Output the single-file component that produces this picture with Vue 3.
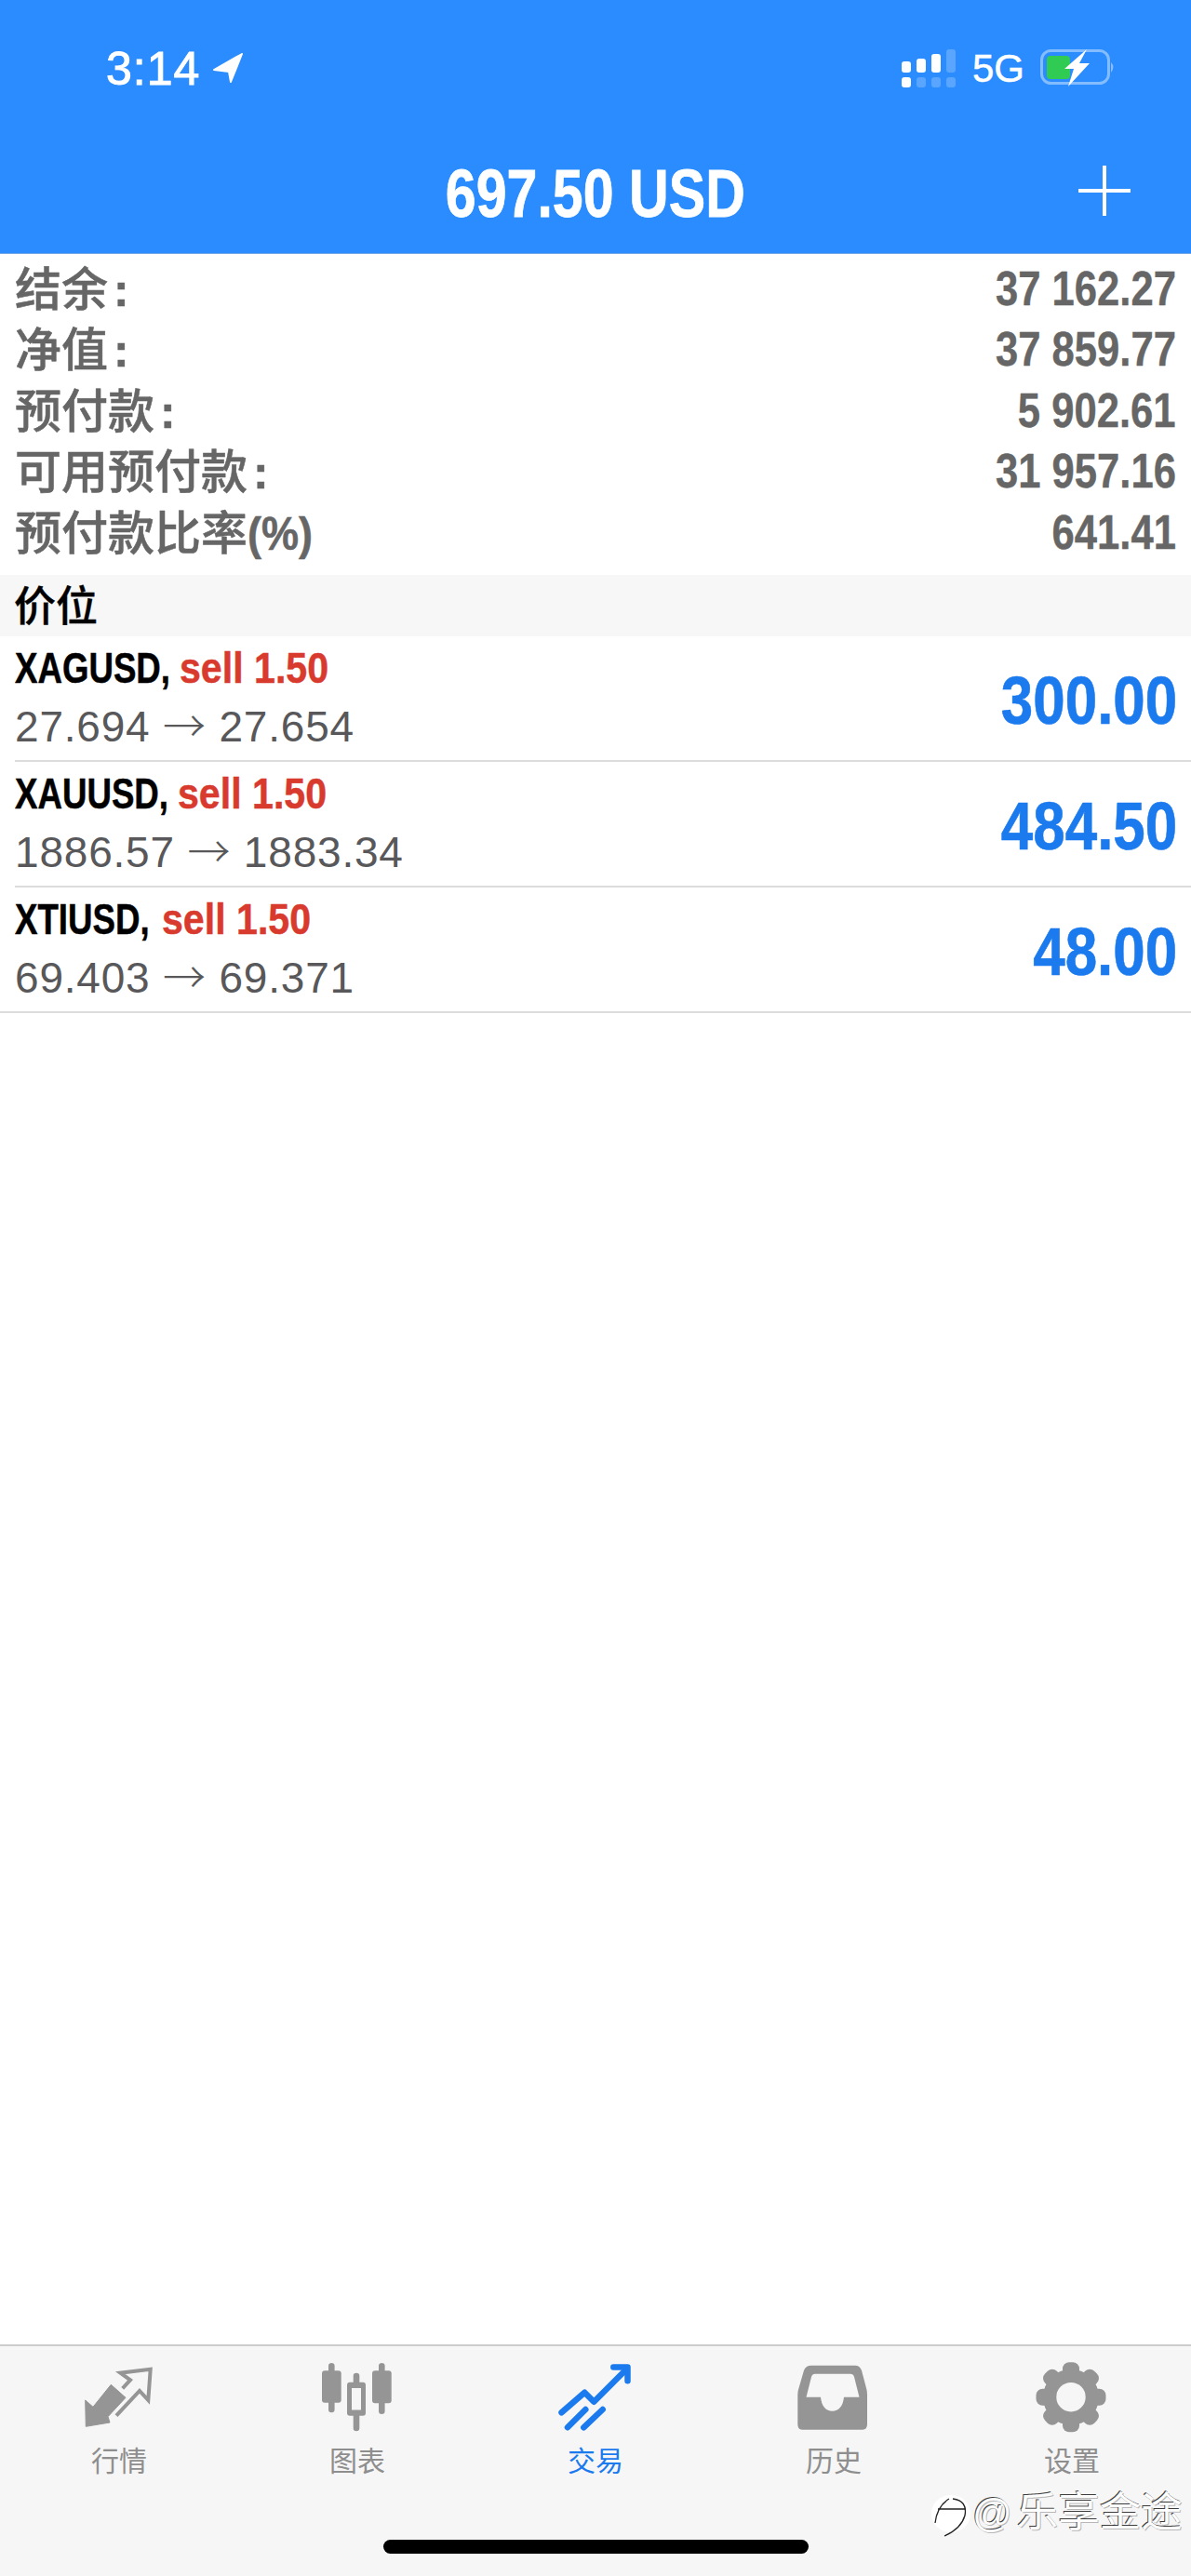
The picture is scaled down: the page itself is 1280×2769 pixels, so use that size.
<script setup>
const account = [
  { label: '结余', colon: true, value: '37 162.27' },
  { label: '净值', colon: true, value: '37 859.77' },
  { label: '预付款', colon: true, value: '5 902.61' },
  { label: '可用预付款', colon: true, value: '31 957.16' },
  { label: '预付款比率', pct: true, value: '641.41' }
]
const FONT = 47
const SCALE = 0.78
const symMargin = (p) => `${p.gap - p.em * FONT * (1 - SCALE)}px`
const positions = [
  { sym: 'XAGUSD,', em: 4.556, gap: 10, side: 'sell 1.50', from: '27.694', to: '27.654', profit: '300.00' },
  { sym: 'XAUUSD,', em: 4.5, gap: 10, side: 'sell 1.50', from: '1886.57', to: '1883.34', profit: '484.50' },
  { sym: 'XTIUSD,', em: 3.945, gap: 13, side: 'sell 1.50', from: '69.403', to: '69.371', profit: '48.00' }
]
const teeth = [0, 45, 90, 135, 180, 225, 270, 315]
</script>

<template>
  <div class="page">
    <header class="head">
      <div class="status">
        <div class="status-left">
          <span class="clock">3:14</span>
          <svg class="loc" width="32" height="32" viewBox="0 0 32 32"><path d="M31 1 L1 18 L17 20 L19 31 Z" fill="#fff" stroke="#fff" stroke-width="2" stroke-linejoin="round" /></svg>
        </div>
        <div class="status-right">
          <svg width="58" height="41" viewBox="0 0 58 41">
            <g fill="#fff">
              <rect x="0" y="13" width="10" height="12" rx="3" />
              <rect x="16" y="10" width="10" height="15" rx="3" />
              <rect x="32" y="5" width="10" height="20" rx="3" />
              <rect x="0" y="30" width="10" height="11" rx="3" />
            </g>
            <g fill="#fff" opacity=".22">
              <rect x="48" y="0" width="10" height="25" rx="3" />
              <rect x="16" y="30" width="10" height="11" rx="3" />
              <rect x="32" y="30" width="10" height="11" rx="3" />
              <rect x="48" y="30" width="10" height="11" rx="3" />
            </g>
          </svg>
          <span class="net">5G</span>
          <svg class="batt" width="82" height="40" viewBox="0 0 82 40">
            <rect x="1.5" y="1.5" width="72" height="35" rx="10" fill="none" stroke="#fff" stroke-opacity=".42" stroke-width="3" />
            <rect x="7" y="7" width="25" height="25" rx="4" fill="#2fcb52" />
            <path d="M76 14 Q81 19 76 25 Z" fill="#fff" fill-opacity=".42" />
            <path d="M50 0 L26 21 L36 21 L30 40 L53 15 L42 15 Z" fill="#fff" />
          </svg>
        </div>
      </div>
      <div class="nav">
        <span class="title">697.50 USD</span>
        <svg class="plus" width="56" height="54" viewBox="0 0 56 54"><path d="M28 0V54M0 27H56" stroke="#fff" stroke-width="4" /></svg>
      </div>
    </header>

    <section class="account">
      <div v-for="a in account" :key="a.label" class="acc-row">
        <span class="acc-label">{{ a.label }}<span v-if="a.colon" class="colon">:</span><span v-if="a.pct" class="pct">(%)</span></span>
        <span class="acc-value">{{ a.value }}</span>
      </div>
    </section>

    <div class="section-bar">价位</div>

    <section>
      <div v-for="(p, i) in positions" :key="p.sym" class="pos" :class="{ last: i === positions.length - 1 }">
        <div class="pos-inner">
          <div class="pos-left">
            <div class="pos-name"><span class="sym" :style="{ marginRight: symMargin(p) }">{{ p.sym }}</span><span class="side">{{ p.side }}</span></div>
            <div class="pos-price">{{ p.from }} <span class="arrow">→</span> {{ p.to }}</div>
          </div>
          <div class="pos-profit">{{ p.profit }}</div>
        </div>
      </div>
    </section>

    <nav class="tabbar">
      <div class="tabs">
        <div class="tab">
          <svg width="80" height="80" viewBox="0 0 80 80">
            <path d="M4.3 71.3 L3.7 43 L12 50.3 L31.3 26.3 L47 40.3 L28 60.7 L30 67 Z" fill="#959595" stroke="#959595" stroke-linejoin="round" />
            <path d="M43.7 30.3 L52 21.3 L41.3 13.7 L73.7 9.7 L71.3 43 L62 33 L37 59.7" fill="none" stroke="#959595" stroke-width="4" />
          </svg>
          <span>行情</span>
        </div>
        <div class="tab">
          <svg width="80" height="80" viewBox="0 0 80 80">
            <g fill="#959595">
              <rect x="2" y="11.3" width="20.7" height="34.4" rx="3" />
              <rect x="9" y="3" width="6.6" height="53.3" rx="3.3" />
              <rect x="56" y="11.3" width="20.7" height="35" rx="3" />
              <rect x="63" y="3" width="6.6" height="55" rx="3.3" />
              <rect x="35.7" y="13.7" width="6.6" height="62.6" rx="3.3" />
              <rect x="29" y="23.7" width="20" height="36" rx="3" />
            </g>
            <rect x="34" y="30" width="10" height="23.5" fill="#f6f6f6" />
          </svg>
          <span>图表</span>
        </div>
        <div class="tab active">
          <svg width="80" height="80" viewBox="0 0 80 80">
            <g fill="none" stroke="#1a7aee" stroke-width="6.5" stroke-linecap="round" stroke-linejoin="round">
              <path d="M3.5 56.3 L28.3 34.7 L38.3 44.7 L70 13" />
              <path d="M59.3 7.5 H74.5 V22.3" />
              <path d="M10 72.3 L29.3 53" />
              <path d="M27.3 72.3 L47.7 53" />
            </g>
          </svg>
          <span>交易</span>
        </div>
        <div class="tab">
          <svg width="80" height="80" viewBox="0 0 80 80">
            <path fill="#959595" fill-rule="evenodd" d="M16 5.7 H63 Q68 5.7 70 11 L75 30 Q76 33 76 37 V69 Q76 74.7 71 74.7 H6 Q1.3 74.7 1.3 69 V37 Q1.3 33 2.5 30 L8 11 Q10 5.7 16 5.7 Z M20 14.7 H58 Q61 14.7 62 18 L67.5 39.7 H51 C50 50 45 54.7 38.5 54.7 C32 54.7 27 50 26 39.7 H10.5 L16 18 Q17 14.7 20 14.7 Z" />
          </svg>
          <span>历史</span>
        </div>
        <div class="tab">
          <svg width="80" height="80" viewBox="0 0 80 80">
            <g fill="#959595">
              <circle cx="39" cy="39.7" r="30" />
              <rect v-for="t in teeth" :key="t" x="30" y="2.2" width="18" height="20" rx="7" :transform="`rotate(${t} 39 39.7)`" />
            </g>
            <circle cx="39" cy="39.7" r="15.7" fill="#f6f6f6" />
          </svg>
          <span>设置</span>
        </div>
      </div>
      <div class="home-bar"></div>
      <div class="watermark">
        <svg width="44" height="50" viewBox="0 0 44 50">
          <ellipse cx="22" cy="24" rx="21" ry="20" fill="#fff" />
          <path d="M5 34 Q7 16 20 8 M24 8 Q40 10 37 26 Q33 40 15 48 M8 19 H38" fill="none" stroke="#222" stroke-width="1.3" />
        </svg>
        <span class="wm-text"><span class="wm-at">@</span>乐享金途</span>
      </div>
    </nav>
  </div>
</template>

<style scoped>
.page {
  position: relative;
  width: 1280px;
  height: 2769px;
  overflow: hidden;
  display: flex;
  flex-direction: column;
  background: #fff;
  font-family: "Liberation Sans", "Noto Sans CJK SC", sans-serif;
}
.head {
  height: 273px;
  box-sizing: border-box;
  background: #2a8cff;
  border-bottom: 1px solid #6ea6e6;
  color: #fff;
}
.status {
  height: 136px;
  box-sizing: border-box;
  padding: 12px 80px 0 114px;
  display: flex;
  align-items: center;
  justify-content: space-between;
}
.status-left { display: flex; align-items: center; gap: 14px; }
.clock { font-size: 50px; line-height: 50px; font-weight: 500; letter-spacing: 1px; -webkit-text-stroke: 1px #fff; }
.loc { margin-top: -2px; }
.status-right { display: flex; align-items: center; }
.status-right > svg:first-child { margin-top: -2px; margin-right: -1px; position: relative; left: -2px; }
.net { margin-left: 17px; font-size: 42px; line-height: 40px; -webkit-text-stroke: .5px #fff; }
.batt { margin-left: 17px; margin-top: -3px; }
.nav {
  position: relative;
  height: 136px;
  display: flex;
  align-items: center;
  justify-content: center;
}
.title {
  font-size: 73px;
  line-height: 73px;
  font-weight: 700;
  margin-top: 6px;
  transform: scaleX(.81);
  white-space: nowrap;
  -webkit-text-stroke: .8px #fff;
}
.plus { position: absolute; right: 65px; top: 42px; }
.account { padding: 6px 16px 12px 16px; height: 345px; box-sizing: border-box; }
.acc-row {
  height: 65.5px;
  display: flex;
  align-items: center;
  justify-content: space-between;
  color: #666;
}
.acc-label {
  font-size: 50px;
  line-height: 60px;
  font-weight: 500;
  white-space: nowrap;
  color: #666;
  -webkit-text-stroke: .5px #666;
}
.colon { margin-left: 6px; font-weight: 700; }
.pct { display: inline-block; font-weight: 700; transform: scaleX(.9); transform-origin: left center; }
.acc-value {
  font-size: 51px;
  line-height: 60px;
  font-weight: 700;
  white-space: nowrap;
  transform: scaleX(.855);
  transform-origin: right center;
  margin-top: -2px;
  -webkit-text-stroke: .4px #666;
}
.section-bar {
  height: 66px;
  background: #f7f7f7;
  color: #000;
  font-size: 45px;
  line-height: 70px;
  padding-left: 15px;
  font-weight: 500;
  -webkit-text-stroke: .4px #000;
}
.pos { padding-left: 16px; }
.pos.last { padding-left: 0; }
.pos.last .pos-left { padding-left: 16px; }
.pos-inner {
  height: 135px;
  box-sizing: border-box;
  border-bottom: 2px solid #dcdcdc;
  display: flex;
  align-items: center;
  justify-content: space-between;
  padding-right: 15px;
}
.pos-left { display: flex; flex-direction: column; }
.pos-name {
  display: flex;
  font-size: 47px;
  line-height: 60px;
  font-weight: 700;
  white-space: nowrap;
  margin-top: -2px;
  margin-bottom: 2px;
  -webkit-text-stroke: .5px;
}
.sym { display: inline-block; color: #000; transform: scaleX(.78); transform-origin: left center; }
.side { display: inline-block; color: #d93a2e; transform: scaleX(.875); transform-origin: left center; }
.pos-price {
  font-size: 46px;
  line-height: 62px;
  color: #58585a;
  letter-spacing: .8px;
  white-space: nowrap;
}
.arrow { font-family: "Noto Sans CJK SC", sans-serif; font-size: 46px; line-height: 40px; font-weight: 300; }
.pos-profit {
  font-size: 72px;
  line-height: 72px;
  font-weight: 700;
  color: #1a7aee;
  white-space: nowrap;
  margin-top: 4px;
  transform: scaleX(.86);
  transform-origin: right center;
  -webkit-text-stroke: .6px #1a7aee;
}
.tabbar {
  position: relative;
  margin-top: auto;
  height: 249px;
  box-sizing: border-box;
  background: #f6f6f6;
  border-top: 2px solid #cccccc;
  padding-top: 15px;
  display: flex;
  flex-direction: column;
  align-items: center;
}
.tabs { width: 100%; display: grid; grid-template-columns: repeat(5, 1fr); }
.tab {
  display: flex;
  flex-direction: column;
  align-items: center;
  font-size: 30px;
  line-height: 36px;
  color: #8e8e8e;
}
.tab span { position: relative; top: 1px; }
.tab svg { display: block; margin-bottom: 10px; }
.tab.active { color: #1a7aee; }
.home-bar {
  width: 457px;
  height: 15px;
  margin-top: 67px;
  background: #000;
  border-radius: 8px;
}
.watermark {
  position: absolute;
  left: 1000px;
  top: 156px;
  display: flex;
  align-items: flex-start;
  color: #fff;
}
.wm-text {
  font-size: 44.5px;
  line-height: 46px;
  font-weight: 400;
  white-space: nowrap;
  margin-left: 1px;
  color: #fdfdfd;
  text-shadow: -1px -1px 0 rgba(0, 0, 0, .75), 1px 1px 0 rgba(120, 120, 120, .5);
}
.wm-at { font-size: 42px; margin-right: 5px; }
</style>

<style>
html, body { margin: 0; padding: 0; background: #fff; }
</style>
